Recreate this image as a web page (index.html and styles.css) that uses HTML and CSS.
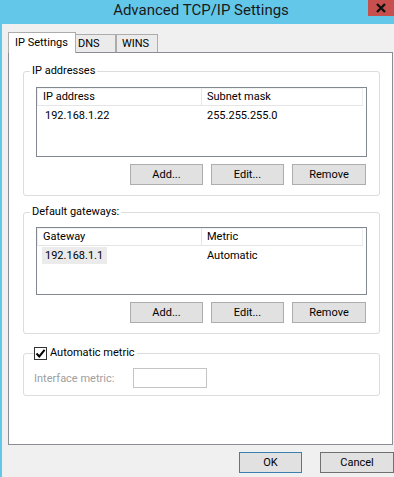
FILE: index.html
```html
<!DOCTYPE html>
<html lang="en">
<head>
  <meta charset="UTF-8">
  <title>Advanced TCP/IP Settings</title>
  <link rel="stylesheet" href="styles.css">
</head>
<body>
  <div class="titlebar">
    <span class="title">Advanced TCP/IP Settings</span>
    <button class="close" aria-label="Close">
      <svg width="12" height="10" viewBox="0 0 12 10"><path d="M2 1 L10 9 M10 1 L2 9" stroke="#111" stroke-width="2.4" fill="none"/></svg>
    </button>
  </div>

  <div class="dialog">
    <div class="tabs">
      <div class="tab active">IP Settings</div>
      <div class="tab tab-dns">DNS</div>
      <div class="tab tab-wins">WINS</div>
    </div>

    <div class="panel">
      <fieldset class="group">
        <legend>IP addresses</legend>
        <div class="listview">
          <div class="lv-head">
            <div class="col c1">IP address</div>
            <div class="col c2">Subnet mask</div>
          </div>
          <div class="lv-row">
            <div class="col c1">192.168.1.22</div>
            <div class="col c2">255.255.255.0</div>
          </div>
        </div>
        <div class="btn-row">
          <button class="btn">Add...</button>
          <button class="btn">Edit...</button>
          <button class="btn btn-wide">Remove</button>
        </div>
      </fieldset>

      <fieldset class="group group-gw">
        <legend>Default gateways:</legend>
        <div class="listview listview-short">
          <div class="lv-head">
            <div class="col c1">Gateway</div>
            <div class="col c2">Metric</div>
          </div>
          <div class="lv-row">
            <div class="col c1 sel-cell"><span class="selected">192.168.1.1</span></div>
            <div class="col c2">Automatic</div>
          </div>
        </div>
        <div class="btn-row">
          <button class="btn">Add...</button>
          <button class="btn">Edit...</button>
          <button class="btn btn-wide">Remove</button>
        </div>
      </fieldset>

      <fieldset class="group group-metric">
        <legend class="check-legend">
          <span class="checkbox">
            <svg width="11" height="11" viewBox="0 0 11 11"><path d="M1.5 5.5 L4.3 8.4 L9.6 1.8" stroke="#000" stroke-width="2" fill="none"/></svg>
          </span>
          <span>Automatic metric</span>
        </legend>
        <div class="metric-row">
          <span class="metric-label">Interface metric:</span>
          <span class="metric-input"></span>
        </div>
      </fieldset>
    </div>

    <div class="footer">
      <button class="btn btn-ok">OK</button>
      <button class="btn btn-cancel">Cancel</button>
    </div>
  </div>
</body>
</html>
```

FILE: styles.css
```css
/* Windows dialog look */
body {
  margin: 0;
  padding: 0;
  background-color: #f0f0f0;
  font-family: Roboto, "Liberation Sans", sans-serif;
  font-size: 11px;
  color: #000;
  overflow: hidden;
}

.titlebar {
  position: relative;
  height: 24px;
  background-color: #63c7e9;
  text-align: center;
  padding-left: 8px;
}

.title {
  font-size: 15px;
  line-height: 21px;
  color: #1a1a1a;
}

.close {
  position: absolute;
  top: 0;
  right: 0;
  width: 26px;
  height: 16px;
  padding: 0;
  border: none;
  background-color: #c7504f;
  display: flex;
  align-items: center;
  justify-content: center;
}

.dialog {
  border-left: 2px solid #63c7e9;
  height: 453px;
}

.tabs {
  display: flex;
  align-items: flex-end;
  height: 21px;
  padding-top: 8px;
  margin-left: 6px;
}

.tab {
  box-sizing: border-box;
  height: 18px;
  margin-bottom: 1px;
  border: 1px solid #acacac;
  border-bottom: none;
  background-color: #ebebeb;
  line-height: 17px;
  padding-left: 6px;
}

.tab.active {
  position: relative;
  z-index: 1;
  height: 21px;
  margin-bottom: 0;
  width: 68px;
  background-color: #fff;
  padding-left: 6px;
  line-height: 19px;
}

.tab-dns {
  width: 40px;
  border-left: none;
  padding-left: 2px;
}

.tab-wins {
  width: 42px;
  padding-left: 5px;
}

.panel {
  box-sizing: border-box;
  margin-top: -1px;
  margin-left: 6px;
  width: 385px;
  height: 393px;
  border: 1px solid #8a8d98;
  background-color: #fff;
  padding: 10px 0 0 14px;
}

.group {
  box-sizing: border-box;
  width: 357px;
  margin: 0;
  padding: 8px 13px 10px 12px;
  border: 1px solid #dcdcdc;
  border-radius: 3px;
}

.group legend {
  margin-left: -6px;
  padding: 0 2px;
  line-height: 16px;
}

.group-gw {
  margin-top: 8px;
  padding-top: 7px;
  padding-bottom: 10px;
}

.listview {
  box-sizing: border-box;
  height: 70px;
  border: 1px solid #828790;
  background-color: #fff;
  margin-right: -1px;
}

.listview-short {
  height: 68px;
}

.lv-head {
  display: flex;
  height: 18px;
}

.lv-head .col {
  border-bottom: 1px solid #e5e5e5;
  border-top: 1px solid #f2f2f2;
  line-height: 16px;
}

.lv-head .c1 {
  border-left: 1px solid #eeeeee;
}

.lv-head .c2 {
  border-left: 1px solid #e5e5e5;
  border-right: 1px solid #eeeeee;
}

.col {
  box-sizing: border-box;
}

.c1 {
  width: 164px;
  padding-left: 5px;
}

.c2 {
  width: 162px;
  padding-left: 5px;
}

.lv-row {
  display: flex;
  height: 17px;
  line-height: 17px;
  margin-top: 1px;
}

.lv-row .c1 {
  padding-left: 8px;
}

.lv-row .c2 {
  padding-left: 6px;
}

.lv-row .sel-cell {
  padding-left: 5px;
}

.selected {
  display: inline-block;
  background-color: #ebebeb;
  padding: 0 4px 0 3px;
  height: 17px;
}

.btn-row {
  display: flex;
  justify-content: flex-end;
  gap: 8px;
  margin-top: 7px;
}

.btn {
  box-sizing: border-box;
  width: 73px;
  height: 21px;
  padding: 0;
  border: 1px solid #adadad;
  background-color: #e1e1e1;
  font-family: inherit;
  font-size: 11px;
  color: #000;
}

.btn-wide {
  width: 74px;
}

.group-metric {
  margin-top: 11px;
  padding: 7px 10px 7px 10px;
}

.check-legend {
  display: flex;
  align-items: center;
  gap: 3px;
  margin-left: 0 !important;
  padding: 0 2px 0 0 !important;
}

.checkbox {
  box-sizing: border-box;
  width: 13px;
  height: 13px;
  border: 1px solid #333;
  background-color: #fff;
  display: flex;
  align-items: center;
  justify-content: center;
}

.metric-row {
  display: flex;
  align-items: center;
}

.metric-label {
  width: 99px;
  color: #a0a0a0;
}

.metric-input {
  box-sizing: border-box;
  width: 74px;
  height: 20px;
  border: 1px solid #c4c4c4;
  background-color: #fff;
}

.footer {
  display: flex;
  justify-content: flex-end;
  gap: 18px;
  margin-top: 7px;
}

.btn-ok {
  width: 63px;
  border-color: #3c7fb1;
}

.btn-cancel {
  width: 74px;
  border-color: #707070;
}
```
